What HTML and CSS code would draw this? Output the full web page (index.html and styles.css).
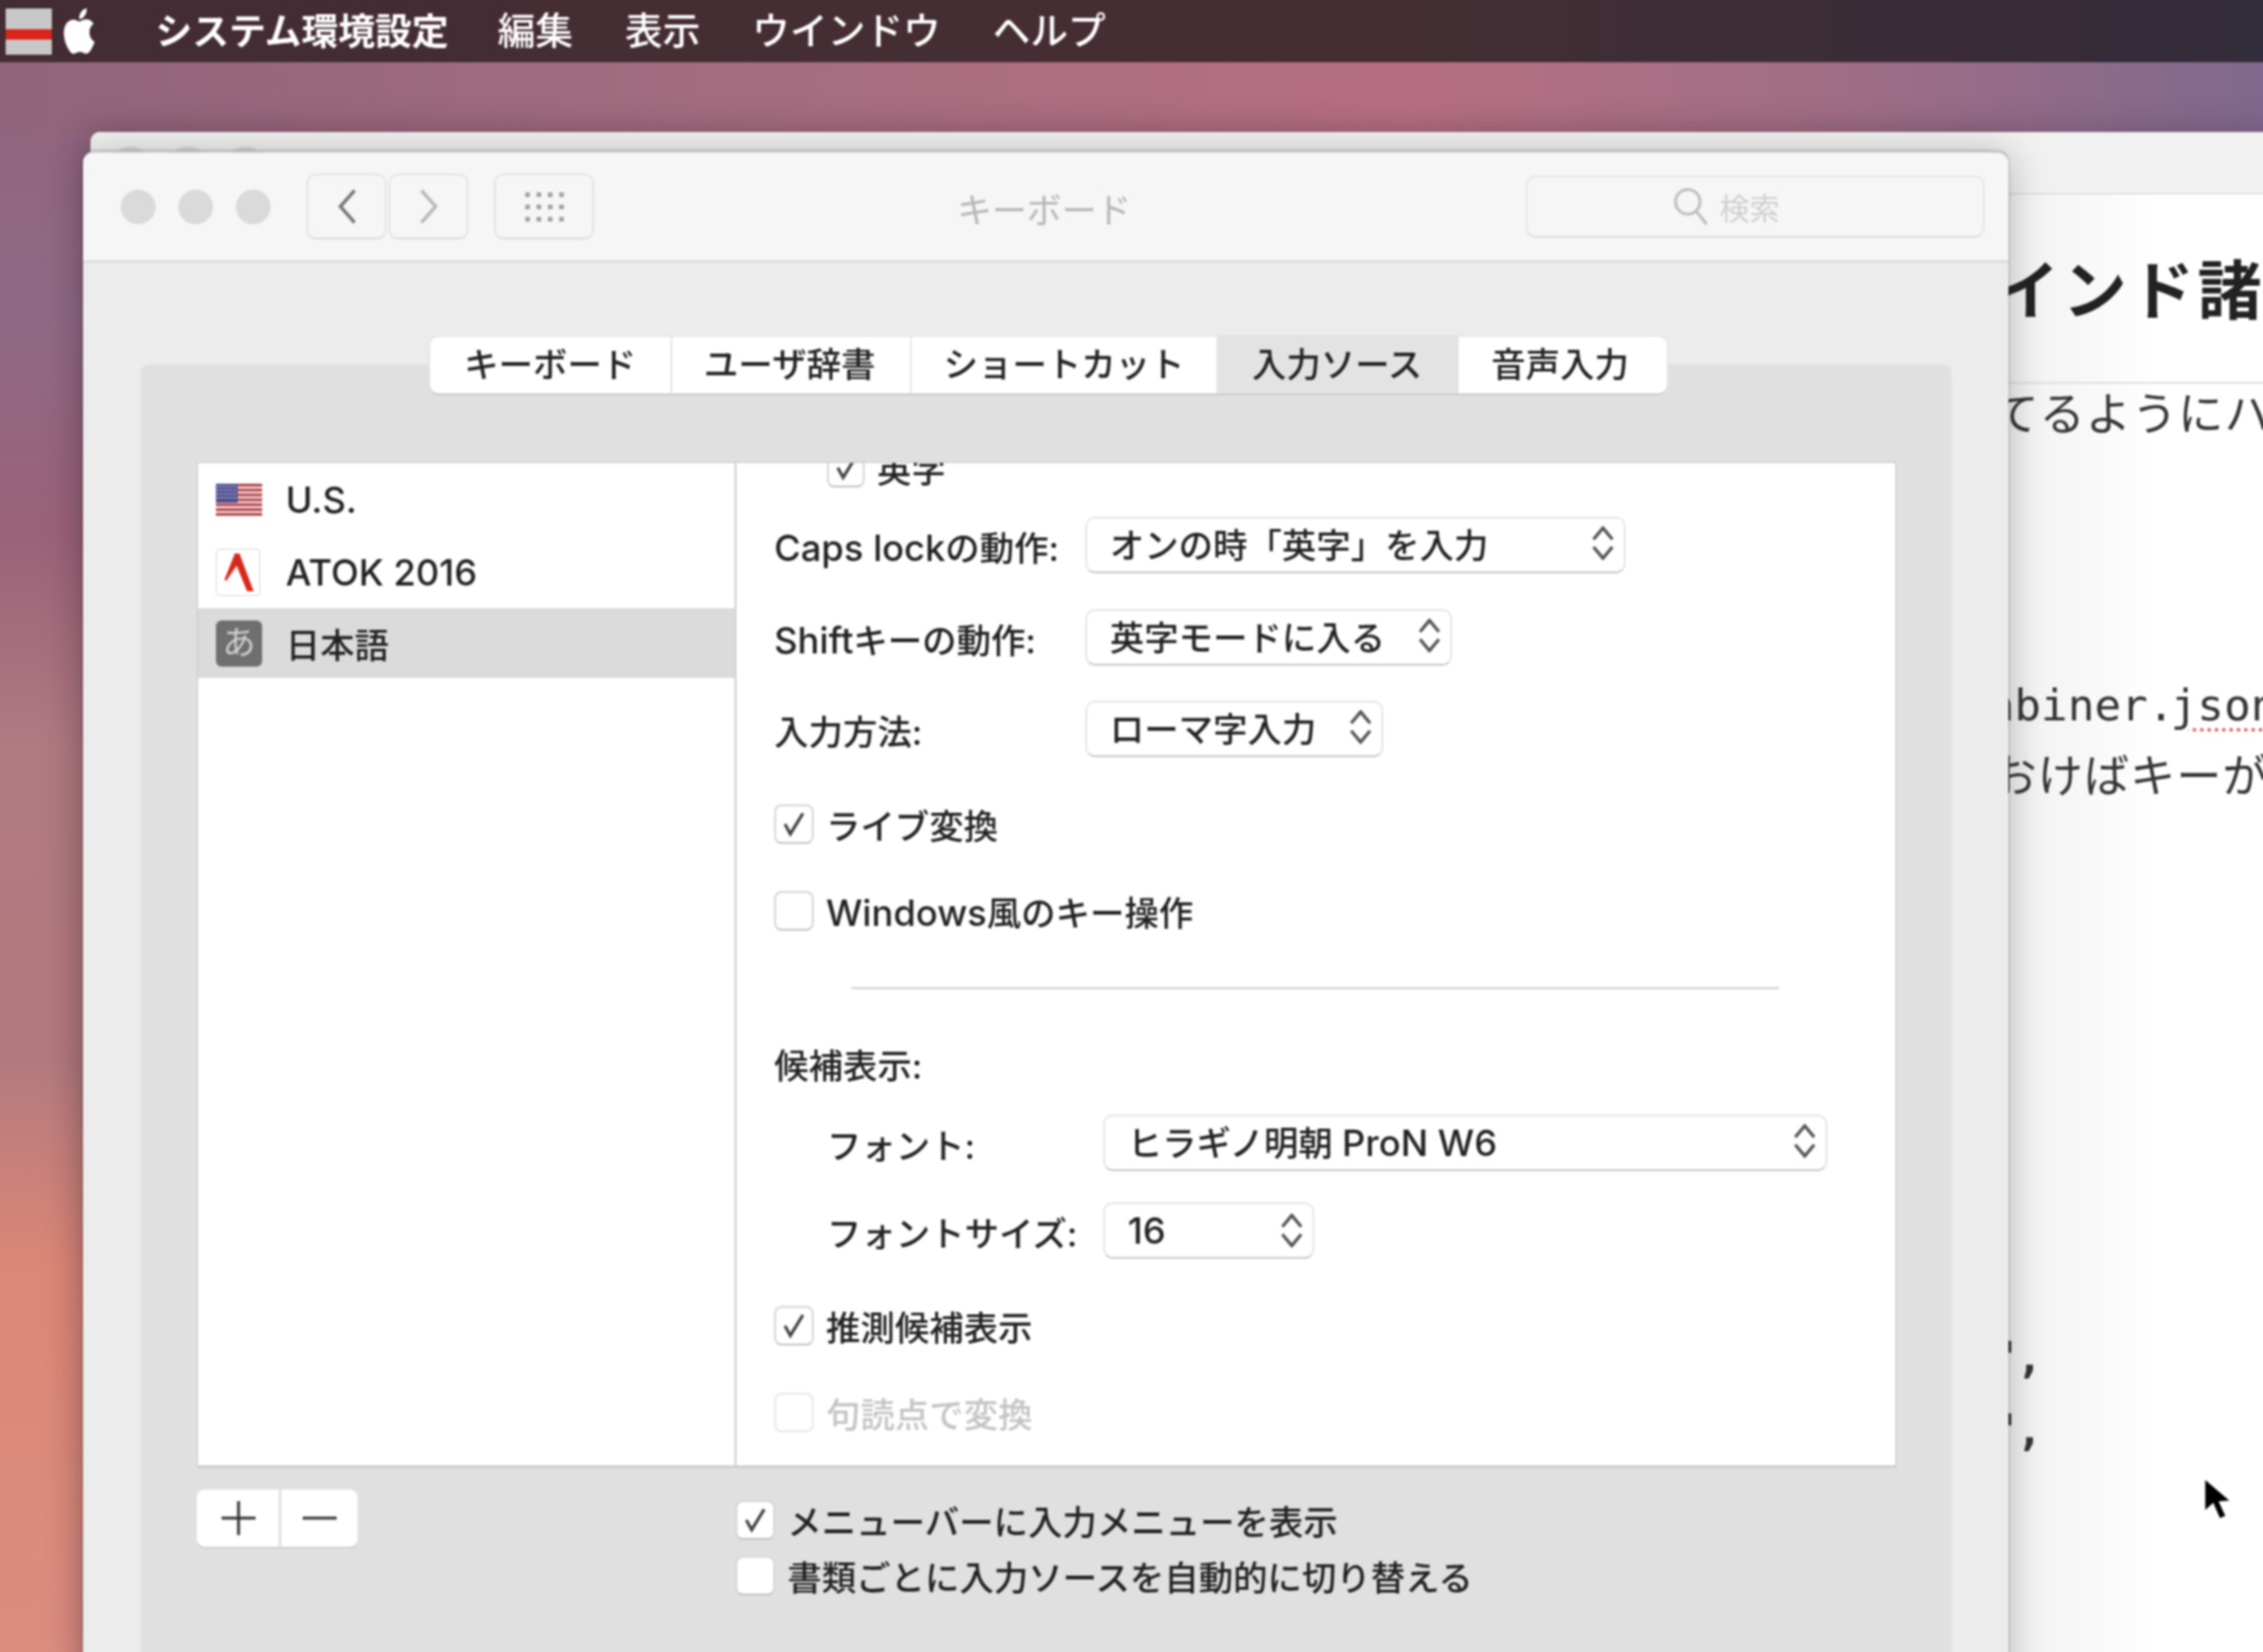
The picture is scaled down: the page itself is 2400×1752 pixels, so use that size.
FILE: index.html
```html
<!DOCTYPE html>
<html lang="ja">
	<head>
		<title>キーボード</title>
		<link rel="stylesheet" href="styles.css">
	</head>
	<body>
		<div class="screen">
			<!-- menu bar -->
			<div class="menubar">
				<div class="menu-flag"></div>
				<svg class="menu-apple" viewBox="0 0 24 24" preserveAspectRatio="none"><path d="M12.152 6.896c-.948 0-2.415-1.078-3.96-1.04-2.04.027-3.91 1.183-4.961 3.014-2.117 3.675-.546 9.103 1.519 12.09 1.013 1.454 2.208 3.09 3.792 3.039 1.52-.065 2.09-.987 3.935-.987 1.831 0 2.35.987 3.96.948 1.637-.026 2.676-1.48 3.676-2.948 1.156-1.688 1.636-3.325 1.662-3.415-.039-.013-3.182-1.221-3.22-4.857-.026-3.04 2.48-4.494 2.597-4.559-1.429-2.09-3.623-2.324-4.39-2.376-2-.156-3.675 1.09-4.61 1.09zM15.53 3.83c.843-1.012 1.4-2.427 1.245-3.83-1.207.052-2.662.805-3.532 1.818-.78.896-1.454 2.338-1.273 3.714 1.338.104 2.715-.688 3.559-1.701"/></svg>
				<span class="menu-item menu-app">システム環境設定</span>
				<span class="menu-item menu-edit">編集</span>
				<span class="menu-item">表示</span>
				<span class="menu-item">ウインドウ</span>
				<span class="menu-item">ヘルプ</span>
			</div>

			<!-- window behind, only its right edge shows -->
			<div class="back-window">
				<div class="back-title">
					<i class="back-light"></i><i class="back-light"></i><i class="back-light"></i>
				</div>
				<div class="doc">
					<div class="doc-heading">インド諸</div>
					<div class="doc-line doc-first">てるようにハ</div>
					<div class="doc-line doc-mono">abiner.<span class="squiggle">json</span></div>
					<div class="doc-line doc-second">おけばキーが</div>
					<div class="doc-mono doc-comma doc-comma-a">',</div>
					<div class="doc-mono doc-comma">',</div>
				</div>
			</div>

			<!-- system preferences window -->
			<div class="window">
				<div class="titlebar">
					<div class="lights"><i></i><i></i><i></i></div>
					<div class="nav-pair">
						<div class="tool-btn nav-btn">
							<svg width="24" height="38" viewBox="0 0 24 38"><path d="M20 2 L5 19 L20 36" fill="none" stroke="#777" stroke-width="3.5"/></svg>
						</div>
						<div class="tool-btn nav-btn">
							<svg width="24" height="38" viewBox="0 0 24 38"><path d="M4 2 L19 19 L4 36" fill="none" stroke="#b8b8b8" stroke-width="3.5"/></svg>
						</div>
					</div>
					<div class="tool-btn grid-btn">
						<div class="grid-dots">
							<i></i><i></i><i></i><i></i>
							<i></i><i></i><i></i><i></i>
							<i></i><i></i><i></i><i></i>
						</div>
					</div>
					<div class="win-title">キーボード</div>
					<div class="search">
						<svg width="40" height="42" viewBox="0 0 40 42"><circle cx="17" cy="16" r="13" fill="none" stroke="#bdbdbd" stroke-width="3"/><path d="M26 26 L37 40" stroke="#bdbdbd" stroke-width="3"/></svg>
						<span>検索</span>
					</div>
				</div>

				<div class="tabs">
					<div class="tab tab-a">キーボード</div>
					<div class="tab tab-b">ユーザ辞書</div>
					<div class="tab tab-c">ショートカット</div>
					<div class="tab tab-d tab-on">入力ソース</div>
					<div class="tab tab-e">音声入力</div>
				</div>

				<div class="panel">
					<div class="split">
						<div class="sources">
							<div class="source">
								<svg class="src-icon flag" viewBox="0 0 49 34" preserveAspectRatio="none">
									<rect width="49" height="34" fill="#f1ecec"/>
									<rect y="0" width="49" height="3" fill="#b8434c"/>
									<rect y="5.2" width="49" height="3" fill="#b8434c"/>
									<rect y="10.4" width="49" height="3" fill="#b8434c"/>
									<rect y="15.6" width="49" height="3" fill="#b8434c"/>
									<rect y="20.8" width="49" height="3" fill="#b8434c"/>
									<rect y="26" width="49" height="3" fill="#b8434c"/>
									<rect y="31" width="49" height="3" fill="#b8434c"/>
									<rect width="23" height="20" fill="#4a4a8c"/>
									<path d="M1 3H22M1 7H22M1 11H22M1 15H22" stroke="#c9c9e0" stroke-width="1.4" stroke-dasharray="2 1.6"/>
								</svg>
								<span class="lat">U.S.</span>
							</div>
							<div class="source">
								<svg class="src-icon atok" viewBox="0 0 47 50">
									<rect x="0.5" y="0.5" width="46" height="49" rx="3" fill="#fff" stroke="#d6d6d6"/>
									<path d="M20 5 L25 5 L40 45 L33 45 L22 18 L11 34 L9 33 Z" fill="#d8281e"/>
								</svg>
								<span class="lat">ATOK 2016</span>
							</div>
							<div class="source source-on">
								<div class="src-icon kana">あ</div>
								<span>日本語</span>
							</div>
						</div>

						<div class="options">
							<div class="row-check row-clip">
								<div class="check"><svg viewBox="0 0 40 40"><path d="M10 20 L16 31 L30 8" fill="none" stroke="#444" stroke-width="3.5"/></svg></div>
								<span>英字</span>
							</div>

							<div class="row-select row-caps">
								<div class="field-label"><span class="lat">Caps lock</span>の動作:</div>
								<div class="select select-caps">
									<span>オンの時「英字」を入力</span>
									<svg class="updown" viewBox="0 0 24 36"><path d="M2 14 L12 2 L22 14M2 22 L12 34 L22 22" fill="none" stroke="#555" stroke-width="3.5"/></svg>
								</div>
							</div>
							<div class="row-select row-shift">
								<div class="field-label"><span class="lat">Shift</span>キーの動作:</div>
								<div class="select select-shift">
									<span>英字モードに入る</span>
									<svg class="updown" viewBox="0 0 24 36"><path d="M2 14 L12 2 L22 14M2 22 L12 34 L22 22" fill="none" stroke="#555" stroke-width="3.5"/></svg>
								</div>
							</div>
							<div class="row-select row-method">
								<div class="field-label">入力方法:</div>
								<div class="select select-method">
									<span>ローマ字入力</span>
									<svg class="updown" viewBox="0 0 24 36"><path d="M2 14 L12 2 L22 14M2 22 L12 34 L22 22" fill="none" stroke="#555" stroke-width="3.5"/></svg>
								</div>
							</div>

							<div class="row-check row-live">
								<div class="check"><svg viewBox="0 0 40 40"><path d="M10 20 L16 31 L30 8" fill="none" stroke="#444" stroke-width="3.5"/></svg></div>
								<span>ライブ変換</span>
							</div>
							<div class="row-check row-gap">
								<div class="check"></div>
								<span><span class="lat">Windows</span>風のキー操作</span>
							</div>

							<div class="divider"></div>

							<div class="group-title">候補表示:</div>
							<div class="row-select row-font">
								<div class="field-label sub-label">フォント:</div>
								<div class="select select-font">
									<span>ヒラギノ明朝 <span class="lat">ProN W6</span></span>
									<svg class="updown" viewBox="0 0 24 36"><path d="M2 14 L12 2 L22 14M2 22 L12 34 L22 22" fill="none" stroke="#555" stroke-width="3.5"/></svg>
								</div>
							</div>
							<div class="row-select row-size">
								<div class="field-label sub-label">フォントサイズ:</div>
								<div class="select select-size">
									<span class="lat">16</span>
									<svg class="updown" viewBox="0 0 24 36"><path d="M2 14 L12 2 L22 14M2 22 L12 34 L22 22" fill="none" stroke="#555" stroke-width="3.5"/></svg>
								</div>
							</div>

							<div class="row-check row-gap">
								<div class="check"><svg viewBox="0 0 40 40"><path d="M10 20 L16 31 L30 8" fill="none" stroke="#444" stroke-width="3.5"/></svg></div>
								<span>推測候補表示</span>
							</div>
							<div class="row-check row-gap row-off">
								<div class="check"></div>
								<span>句読点で変換</span>
							</div>
						</div>
					</div>

					<div class="under">
						<div class="plus-minus">
							<div class="pm-btn pm-plus"><svg width="36" height="36" viewBox="0 0 36 36"><path d="M18 0V36M0 18H36" stroke="#333" stroke-width="3"/></svg></div>
							<div class="pm-btn pm-minus"><svg width="36" height="4" viewBox="0 0 36 4"><path d="M0 2H36" stroke="#333" stroke-width="3"/></svg></div>
						</div>
						<div class="under-checks">
							<div class="row-check">
								<div class="check"><svg viewBox="0 0 40 40"><path d="M10 20 L16 31 L30 8" fill="none" stroke="#444" stroke-width="3.5"/></svg></div>
								<span>メニューバーに入力メニューを表示</span>
							</div>
							<div class="row-check row-second">
								<div class="check"></div>
								<span>書類ごとに入力ソースを自動的に切り替える</span>
							</div>
						</div>
					</div>
				</div>
			</div>

			<!-- mouse pointer -->
			<svg class="pointer" width="34" height="48" viewBox="0 0 34 48"><path d="M3 2 L3 37 L12 29 L19 45 L26 42 L19 27 L31 26 Z" fill="#000" stroke="#fff" stroke-width="1.5"/></svg>
		</div>
	</body>
</html>
```

FILE: styles.css
```css
html, body {
	margin: 0;
	padding: 0;
	background: #b27a82;
}
.screen {
	position: relative;
	width: 2400px;
	height: 1752px;
	overflow: hidden;
	font-family: "Inter", "Noto Sans CJK JP", sans-serif;
	font-size: 36.5px;
	font-weight: 500;
	color: #222;
	background-color: #b27a82;
	background-image:
		linear-gradient(90deg, #90647a 0, #a56d80 800px, #b66f82 1500px, #a06e85 1950px, #80688e 2400px),
		linear-gradient(180deg, #92637a 0px, #8f6a85 330px, #9a6278 560px, #b27a82 800px, #b27a7e 1120px, #dd8776 1350px, #dc8d80 1752px);
	background-size: 100% 142px, 100% 100%;
	background-repeat: no-repeat;
}
/* the reference is a soft upscaled capture, each layer overshoots the edges so the blur leaves no rim */
.menubar, .back-window, .window, .pointer {
	filter: blur(0.8px);
}
.lat {
	font-size: 38.5px;
}

/* menu bar */
.menubar {
	position: relative;
	z-index: 1;
	display: flex;
	align-items: center;
	height: 66px;
	margin: -8px -8px 0;
	padding: 8px 0 0 8px;
	background: linear-gradient(90deg, #432c33 0%, #452e33 60%, #332c3a 100%);
	color: #fff;
}
.menu-flag {
	width: 49px;
	height: 49px;
	margin-left: 6px;
	background: linear-gradient(180deg, #c8c8c8 0, #c8c8c8 22px, #d8261c 22px, #d8261c 33px, #c8c8c8 33px);
}
.menu-apple {
	width: 40px;
	height: 48px;
	margin-left: 9px;
	fill: #fff;
}
.menu-item {
	margin-left: 55px;
	font-size: 40px;
	line-height: 66px;
}
.menu-app {
	margin-left: 61px;
	font-size: 39px;
	font-weight: 700;
}
.menu-edit {
	margin-left: 52px;
}

/* back window */
.back-window {
	position: absolute;
	left: 96px;
	top: 140px;
	right: -10px;
	bottom: -10px;
	background: #fff;
	border-radius: 10px 0 0 0;
	overflow: hidden;
	box-shadow: 0 0 36px rgba(50,30,45,0.3);
}
.back-title {
	display: flex;
	gap: 26px;
	height: 66px;
	padding-left: 25px;
	padding-top: 15px;
	box-sizing: border-box;
	background: #f1f1f1;
	border-bottom: 1px solid #d2d2d2;
}
.back-light {
	width: 35px;
	height: 35px;
	border-radius: 50%;
	background: #dcdcdc;
}
.doc {
	position: relative;
	height: 1700px;
	padding-left: 2034px;
	white-space: nowrap;
	color: #333;
	font-weight: 400;
	background: linear-gradient(90deg, #f4f4f4 2034px, #f6f6f6 2090px, #fff 2190px);
}
.doc-heading {
	height: 201px;
	box-sizing: border-box;
	border-bottom: 2px solid #dfdfdf;
	padding-top: 59px;
	font-size: 68px;
	line-height: 86px;
	font-weight: 700;
	letter-spacing: 3.5px;
	color: #222;
	text-indent: -14px;
}
.doc-line {
	font-size: 48px;
	line-height: 64px;
	letter-spacing: 1px;
}
.doc-first {
	text-indent: -16px;
}
.doc-mono {
	font-family: "DejaVu Sans Mono", monospace;
	font-size: 47px;
	letter-spacing: 0;
}
.doc-line.doc-mono {
	margin-top: 245px;
	text-indent: -22px;
}
.squiggle {
	margin-left: -4px;
	text-decoration: underline dotted #e06060 4px;
	text-underline-offset: 8px;
}
.doc-second {
	margin-top: 11px;
	text-indent: -18px;
}
.doc-comma {
	line-height: 77px;
	text-indent: -14px;
	letter-spacing: -6px;
	font-weight: 700;
}
.doc-comma-a {
	margin-top: 546px;
}

/* front window */
.window {
	position: absolute;
	left: 88px;
	top: 160px;
	width: 2042px;
	height: 1640px;
	background: #ececec;
	border-top: 2px solid #c6c6c6;
	border-radius: 12px 12px 0 0;
	box-shadow: 0 0 3px rgba(0,0,0,0.35), 0 4px 40px rgba(50,30,45,0.32);
}
.titlebar {
	display: flex;
	align-items: center;
	height: 114px;
	background: #f6f6f6;
	border-bottom: 3px solid #dedede;
	border-radius: 12px 12px 0 0;
}
.lights {
	display: flex;
	gap: 24px;
	margin-left: 40px;
}
.lights i {
	width: 37px;
	height: 37px;
	border-radius: 50%;
	background: #dadada;
}
.tool-btn {
	display: flex;
	align-items: center;
	justify-content: center;
	box-sizing: border-box;
	height: 70px;
	border: 2px solid #e4e4e4;
	border-bottom-color: #dcdcdc;
	border-radius: 10px;
	background: #f6f6f6;
}
.nav-pair {
	display: flex;
	gap: 2px;
	margin-left: 38px;
}
.nav-btn {
	width: 85px;
}
.grid-btn {
	width: 106px;
	margin-left: 27px;
}
.grid-dots {
	display: grid;
	grid-template-columns: repeat(4, 5px);
	grid-auto-rows: 5px;
	gap: 8px 7px;
}
.grid-dots i {
	background: #a4a4a4;
}
.win-title {
	width: 186px;
	margin-left: 385px;
	padding-top: 3px;
	font-size: 37px;
	font-weight: 400;
	color: #b6b6b6;
	white-space: nowrap;
}
.search {
	display: flex;
	align-items: center;
	justify-content: center;
	gap: 10px;
	box-sizing: border-box;
	width: 487px;
	height: 66px;
	margin-left: 417px;
	padding-right: 62px;
	border: 2px solid #e6e6e6;
	border-bottom-color: #dddddd;
	border-radius: 10px;
	font-size: 32px;
	font-weight: 400;
	color: #d0d0d0;
}

/* tabs */
.tabs {
	position: relative;
	z-index: 1;
	display: flex;
	width: 1312px;
	height: 60px;
	margin: 78px 0 0 368px;
	box-sizing: border-box;
	background: #fff;
	border-radius: 9px;
	box-shadow: 0 0 0 1px #dcdcdc, 0 2px 0 #bdbdbd;
	overflow: hidden;
}
.tab {
	display: flex;
	align-items: center;
	justify-content: center;
	box-sizing: border-box;
	line-height: 60px;
	border-right: 2px solid #e6e6e6;
	white-space: nowrap;
}
.tab-a { width: 257px; }
.tab-b { width: 254px; padding-right: 3px; }
.tab-c { width: 325px; }
.tab-d { width: 255px; padding-right: 3px; border-right: none; }
.tab-e { width: 221px; padding-right: 6px; border-right: none; }
.tab-on {
	background: #e3e3e3;
}

/* panel */
.panel {
	margin: -30px 61px 0 62px;
	padding: 103px 58px 0 59px;
	height: 1400px;
	background: #e0e0e0;
	border-radius: 8px 8px 0 0;
	box-shadow: 0 0 0 1px #e6e6e6;
}
.split {
	display: flex;
	height: 1067px;
	box-sizing: border-box;
	background: #fff;
	border: 1px solid #c8c8c8;
	border-bottom: 3px solid #cfcfcf;
}
.sources {
	width: 569px;
	flex: none;
	border-right: 2px solid #cfcfcf;
}
.source {
	display: flex;
	align-items: center;
	height: 77px;
	padding-left: 19px;
}
.source > span {
	margin-left: 25px;
}
.source-on {
	height: 74px;
	background: #dbdbdb;
}
.src-icon {
	flex: none;
	width: 49px;
}
.flag {
	height: 34px;
}
.atok {
	height: 50px;
	width: 47px;
	margin-right: 2px;
}
.kana {
	height: 49px;
	line-height: 46px;
	text-align: center;
	font-size: 35px;
	font-weight: 400;
	border-radius: 6px;
	background: #6f6f6f;
	color: #cfcfcf;
}

/* options on the right of the list */
.options {
	flex: 1;
	overflow: hidden;
	padding-left: 40px;
}
.row-check {
	display: flex;
	align-items: center;
	height: 42px;
	white-space: nowrap;
}
.row-check > span {
	margin-left: 13px;
}
.check {
	flex: none;
	box-sizing: border-box;
	width: 42px;
	height: 42px;
	background: #fff;
	border: 2px solid #d6d6d6;
	border-bottom-color: #c4c4c4;
	border-radius: 8px;
}
.check svg {
	display: block;
	width: 38px;
	height: 38px;
}
.row-clip {
	margin-top: -16px;
	margin-left: 56px;
}
.row-clip .check {
	width: 40px;
}
.row-select {
	display: flex;
	align-items: center;
	height: 60px;
	white-space: nowrap;
}
.field-label {
	flex: none;
	width: 330px;
	padding-top: 3px;
}
.sub-label {
	width: 293px;
	margin-left: 56px;
}
.select {
	display: flex;
	align-items: center;
	justify-content: space-between;
	box-sizing: border-box;
	height: 60px;
	padding: 0 10px 4px 24px;
	background: #fff;
	border: 2px solid #e6e6e6;
	border-bottom-color: #c8c8c8;
	border-radius: 10px;
}
.updown {
	flex: none;
	width: 24px;
	height: 36px;
}
.row-caps { margin-top: 31px; }
.row-shift { margin-top: 38px; }
.row-method { margin-top: 37px; }
.select-caps { width: 573px; }
.select-shift { width: 389px; }
.select-method { width: 316px; }
.row-live { margin-top: 50px; }
.row-gap { margin-top: 50px; }
.divider {
	height: 2px;
	width: 984px;
	margin: 60px 0 0 82px;
	background: #cfcfcf;
}
.group-title {
	margin-top: 57px;
	line-height: 50px;
}
.row-font { margin-top: 26px; }
.row-size { margin-top: 33px; }
.select-font { width: 768px; }
.select-size { width: 224px; padding-bottom: 0; }
.row-off {
	color: #c4c4c4;
}
.row-off .check {
	border-color: #e8e8e8;
}

/* below the list */
.under {
	display: flex;
	margin-top: 23px;
}
.plus-minus {
	display: flex;
	flex: none;
	width: 170px;
	height: 60px;
	background: #fff;
	border-radius: 8px;
	box-shadow: 0 0 0 1px #e6e6e6, 0 2px 0 #c2c2c2;
}
.pm-btn {
	display: flex;
	align-items: center;
	justify-content: center;
}
.pm-plus {
	width: 87px;
	border-right: 2px solid #d4d4d4;
}
.pm-minus {
	flex: 1;
}
.under-checks {
	margin: 11px 0 0 401px;
}
.row-second {
	margin-top: 17px;
}

.pointer {
	position: absolute;
	left: 2335px;
	top: 1566px;
}
```
